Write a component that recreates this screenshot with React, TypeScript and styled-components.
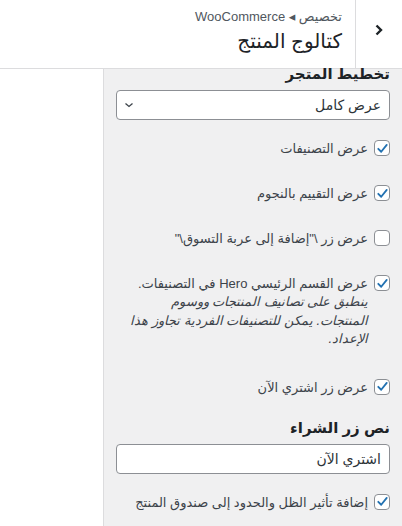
import styled, { createGlobalStyle } from 'styled-components';

const GlobalStyle = createGlobalStyle`
  html, body {
    margin: 0;
    padding: 0;
    background: #ffffff;
    overflow: hidden;
  }
  * {
    box-sizing: border-box;
  }
  body {
    font-family: "Liberation Sans", "DejaVu Sans", sans-serif;
    color: #3c434a;
  }
`;

const Page = styled.div`
  width: 402px;
  height: 526px;
  display: flex;
  flex-direction: column;
  direction: rtl;
  overflow: hidden;
`;

const Header = styled.div`
  height: 69px;
  flex-shrink: 0;
  display: flex;
  border-bottom: 1px solid #dcdcde;
  background: #fff;
`;

const BackButton = styled.div`
  width: 47px;
  flex-shrink: 0;
  display: flex;
  align-items: center;
  justify-content: center;
  border-left: 1px solid #dcdcde;
  padding-bottom: 8px;
`;

const HeaderText = styled.div`
  padding: 8px 13px 0 0;
  display: flex;
  flex-direction: column;
`;

const Crumb = styled.div`
  font-size: 13px;
  line-height: 18px;
  color: #50575e;
`;

const Title = styled.div`
  font-size: 20px;
  line-height: 30px;
  color: #1d2327;
`;

const Body = styled.div`
  flex: 1;
  display: flex;
  min-height: 0;
`;

const Panel = styled.div`
  width: 299px;
  flex-shrink: 0;
  background: #f0f0f1;
  border-left: 1px solid #dcdcde;
  padding: 0 12px;
`;

const Blank = styled.div`
  flex: 1;
  background: #fff;
`;

const SectionTitle = styled.div<{ $top?: number }>`
  font-size: 15px;
  font-weight: bold;
  line-height: 20px;
  color: #1d2327;
  margin-top: ${p => p.$top ?? 0}px;
  margin-bottom: 6px;
`;

const Select = styled.div`
  height: 30px;
  border: 1px solid #8c8f94;
  border-radius: 4px;
  background: #fff;
  display: flex;
  align-items: center;
  justify-content: space-between;
  padding: 0 8px 0 7px;
  font-size: 14px;
  color: #2c3338;
`;

const TextInput = styled.div`
  height: 30px;
  border: 1px solid #8c8f94;
  border-radius: 4px;
  background: #fff;
  display: flex;
  align-items: center;
  padding: 0 8px;
  font-size: 14px;
  color: #2c3338;
`;

const CheckRow = styled.div<{ $top: number }>`
  display: flex;
  align-items: flex-start;
  gap: 6px;
  margin-top: ${p => p.$top}px;
`;

const Box = styled.span`
  width: 16px;
  height: 16px;
  margin-top: 1px;
  flex-shrink: 0;
  border: 1px solid #8c8f94;
  border-radius: 4px;
  background: #fff;
  display: flex;
  align-items: center;
  justify-content: center;
`;

const LabelText = styled.div`
  font-size: 13px;
  line-height: 19px;
  color: #3c434a;
`;

const Desc = styled.div`
  font-style: italic;
  font-size: 13px;
  line-height: 18.5px;
  color: #3c434a;
  max-width: 238px;
`;

const Check = () => (
  <svg width="13" height="13" viewBox="0 0 20 20">
    <path d="M3.5 10.5 L8 15 L16.5 4.5" fill="none" stroke="#2271b1" strokeWidth="2.8" strokeLinecap="round" strokeLinejoin="round" />
  </svg>
);

const Chevron = () => (
  <svg width="10" height="10" viewBox="0 0 10 10">
    <path d="M1.5 3.5 L5 6.5 L8.5 3.5" fill="none" stroke="#3c434a" strokeWidth="1.3" />
  </svg>
);

type OptionProps = { on?: boolean; top: number; children: React.ReactNode; desc?: string };

const Option = ({ on, top, children, desc }: OptionProps) => (
  <CheckRow $top={top}>
    <Box>{on && <Check />}</Box>
    <div>
      <LabelText>{children}</LabelText>
      {desc && <Desc>{desc}</Desc>}
    </div>
  </CheckRow>
);

export default function App() {
  return (
    <Page>
      <GlobalStyle />
      <Header>
        <BackButton>
          <svg width="14" height="14" viewBox="0 0 14 14">
            <path d="M4.5 2.5 L9 7 L4.5 11.5" fill="none" stroke="#1d2327" strokeWidth="2.4" />
          </svg>
        </BackButton>
        <HeaderText>
          <Crumb>تخصيص ◂ WooCommerce</Crumb>
          <Title>كتالوج المنتج</Title>
        </HeaderText>
      </Header>
      <Body>
        <Panel>
          <SectionTitle $top={-5}>تخطيط المتجر</SectionTitle>
          <Select>
            <span>عرض كامل</span>
            <Chevron />
          </Select>
          <Option on top={19}>عرض التصنيفات</Option>
          <Option on top={26}>عرض التقييم بالنجوم</Option>
          <Option top={26}>عرض زر \"إضافة إلى عربة التسوق\"</Option>
          <Option
            on
            top={26}
            desc="ينطبق على تصانيف المنتجات ووسوم المنتجات. يمكن للتصنيفات الفردية تجاوز هذا الإعداد."
          >
            عرض القسم الرئيسي Hero في التصنيفات.
          </Option>
          <Option on top={29}>عرض زر اشتري الآن</Option>
          <SectionTitle $top={21}>نص زر الشراء</SectionTitle>
          <TextInput>اشتري الآن</TextInput>
          <Option on top={19}>إضافة تأثير الظل والحدود إلى صندوق المنتج</Option>
        </Panel>
        <Blank />
      </Body>
    </Page>
  );
}
